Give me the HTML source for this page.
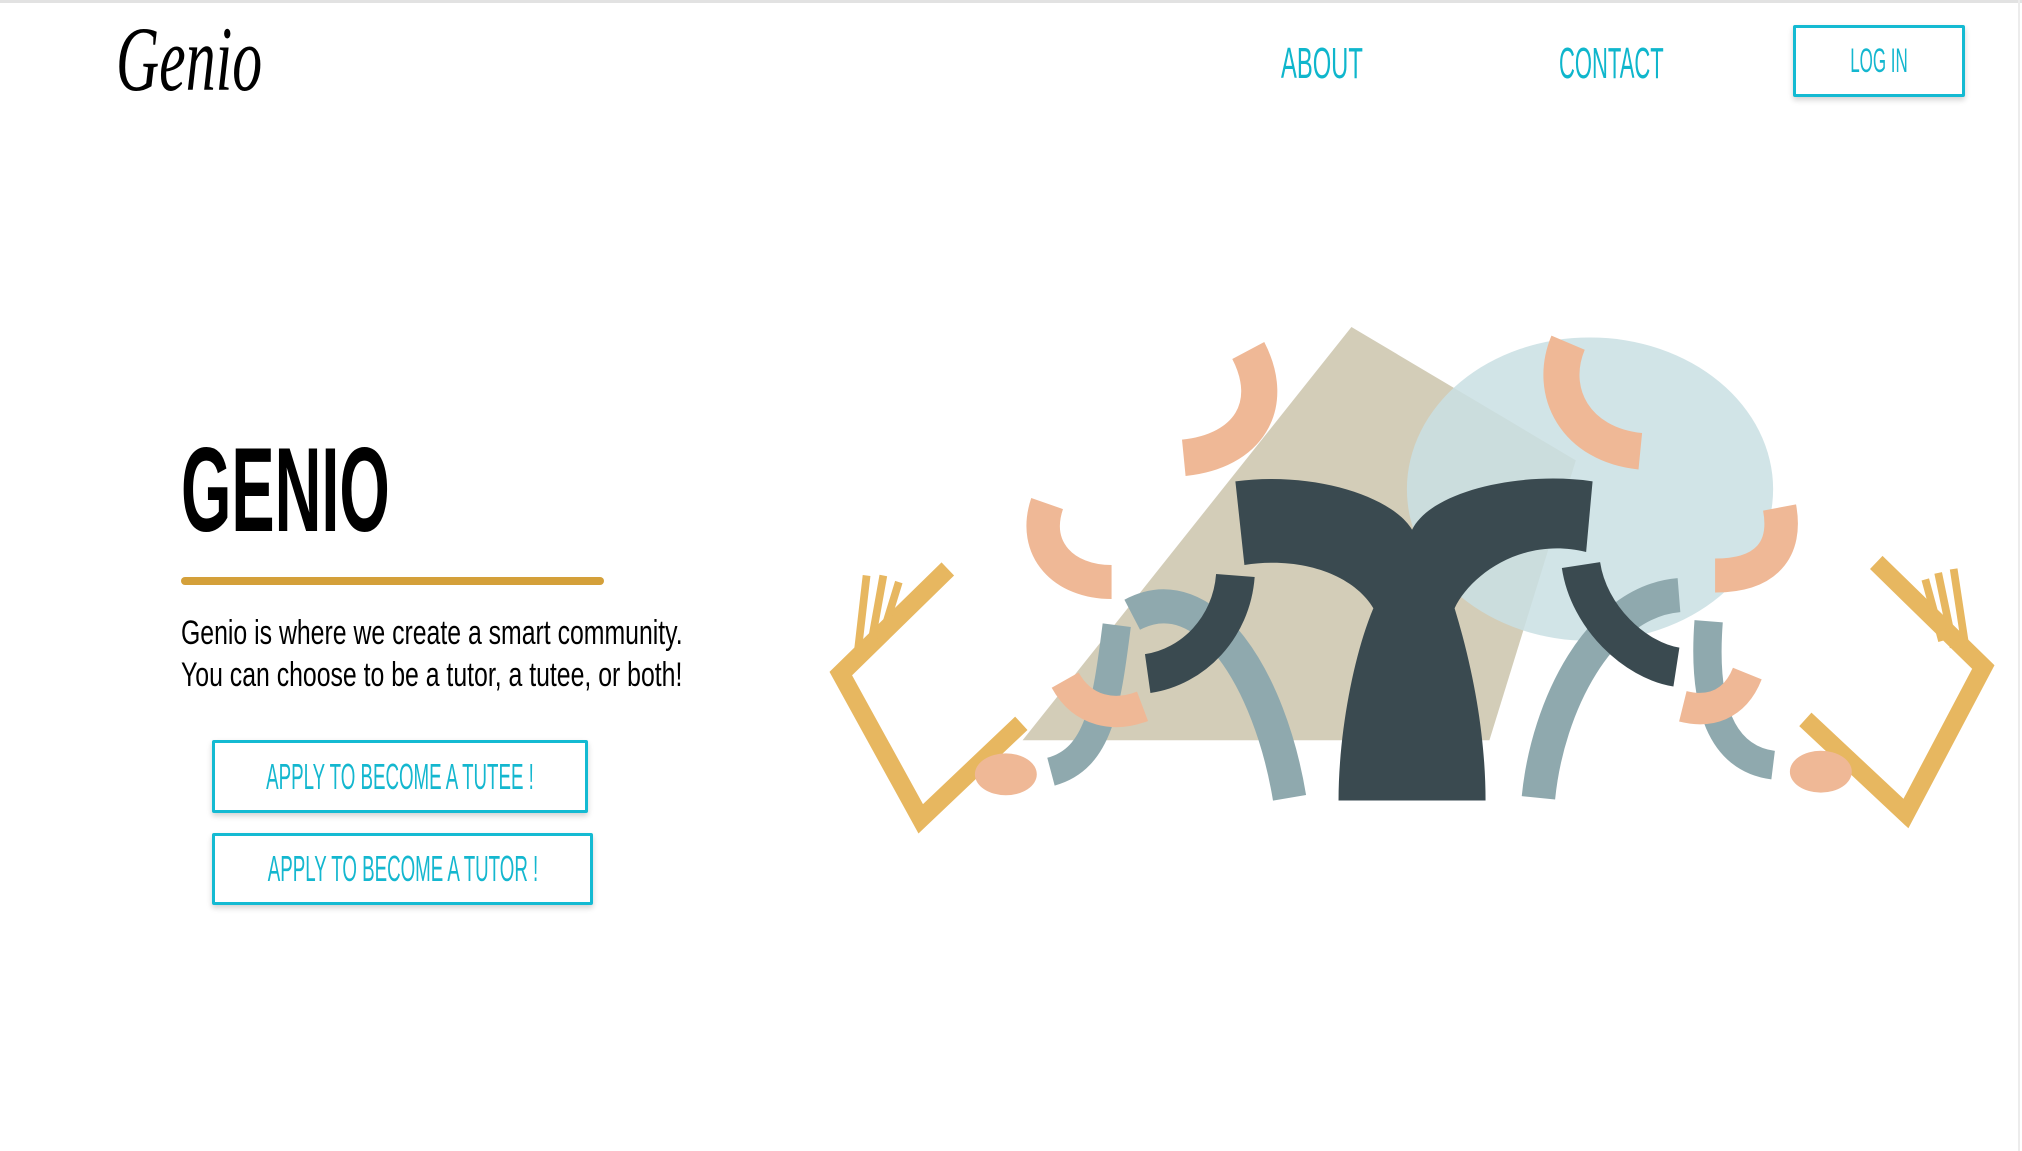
<!DOCTYPE html>
<html><head><meta charset="utf-8"><style>
html,body{margin:0;padding:0;}
body{width:2022px;height:1151px;position:relative;overflow:hidden;background:#fff;font-family:"Liberation Sans",sans-serif;}
.t{position:absolute;white-space:nowrap;}
.c{display:inline-block;transform-origin:0 0;}
.nav{color:#0fb6cc;font-size:44px;line-height:44px;}
.btn{position:absolute;border:3px solid #14bad2;box-sizing:border-box;border-radius:2px;box-shadow:0 3px 6px rgba(0,0,0,0.18);background:#fff;}
.btn span{position:absolute;left:50%;top:50%;white-space:nowrap;color:#14b7cf;font-size:36px;line-height:36px;transform:translate(-50%,-50%) scaleX(0.52);}
</style></head><body>
<div style="position:absolute;left:0;top:0;width:2022px;height:3px;background:#e2e2e2"></div>
<div style="position:absolute;right:2px;top:0;width:2px;height:1151px;background:#ececec"></div>

<div class="t" style="left:116px;top:4px;font-family:'Liberation Serif',serif;font-style:italic;font-size:92px;line-height:110px;"><span class="c" style="transform:scaleX(0.65)">Genio</span></div>

<div class="t nav" style="left:1281px;top:42px;"><span class="c" style="transform:scaleX(0.54)">ABOUT</span></div>
<div class="t nav" style="left:1559px;top:42px;"><span class="c" style="transform:scaleX(0.5)">CONTACT</span></div>
<div class="btn" style="left:1793px;top:25px;width:172px;height:72px;"><span style="font-size:34px;transform:translate(-50%,-50%) scaleX(0.5)">LOG IN</span></div>

<div class="t" style="left:181px;top:430px;font-size:120px;line-height:120px;font-weight:bold;"><span class="c" style="transform:scaleX(0.54)">GENIO</span></div>
<div style="position:absolute;left:181px;top:577px;width:423px;height:8px;background:#d4a03a;border-radius:4px"></div>
<div class="t" style="left:181px;top:612px;font-size:34px;line-height:42px;"><span class="c" style="transform:scaleX(0.73)">Genio is where we create a smart community.<br>You can choose to be a tutor, a tutee, or both!</span></div>

<div class="btn" style="left:212px;top:740px;width:376px;height:73px;"><span>APPLY TO BECOME A TUTEE !</span></div>
<div class="btn" style="left:212px;top:833px;width:381px;height:72px;"><span>APPLY TO BECOME A TUTOR !</span></div>

<svg style="position:absolute;left:0;top:0" width="2022" height="1151" viewBox="0 0 1568 880" preserveAspectRatio="none">
<polygon points="1048,250 1222,352 1155,566 793,566" fill="#d3cdb8"/>
<ellipse cx="1233" cy="374" rx="142" ry="116" fill="#c9dfe3" opacity="0.85"/>
<g fill="none" stroke-linecap="butt">
<path d="M878,470 C935,440 985,520 1000,610" stroke="#8fa9ae" stroke-width="26"/>
<path d="M866,478 C858,540 852,580 815,590" stroke="#8fa9ae" stroke-width="22"/>
<path d="M1302,455 C1240,460 1200,540 1193,610" stroke="#8fa9ae" stroke-width="26"/>
<path d="M1325,475 C1320,540 1335,580 1375,585" stroke="#8fa9ae" stroke-width="22"/>
<path d="M958,440 C955,480 925,510 890,515" stroke="#3a4a50" stroke-width="30"/>
<path d="M1226,432 C1232,472 1268,505 1300,510" stroke="#3a4a50" stroke-width="30"/>
<path d="M968,268 C990,310 968,345 918,350" stroke="#efb896" stroke-width="28"/>
<path d="M1216,262 C1200,300 1222,340 1272,345" stroke="#efb896" stroke-width="28"/>
<path d="M812,385 C800,420 825,445 862,445" stroke="#efb896" stroke-width="26"/>
<path d="M1380,388 C1386,420 1370,440 1330,440" stroke="#efb896" stroke-width="26"/>
<path d="M826,520 C840,545 865,548 886,540" stroke="#efb896" stroke-width="24"/>
<path d="M1355,515 C1345,540 1325,545 1305,540" stroke="#efb896" stroke-width="24"/>
<path d="M735,435 L652,515 L714,626 L792,553" stroke="#e7b760" stroke-width="14" stroke-linejoin="miter"/>
<path d="M665,500 L672,440 M675,495 L685,440 M683,490 L697,445" stroke="#e7b760" stroke-width="6"/>
<path d="M1455,430 L1538,510 L1478,622 L1400,550" stroke="#e7b760" stroke-width="14"/>
<path d="M1525,500 L1515,435 M1515,495 L1503,438 M1506,490 L1493,443" stroke="#e7b760" stroke-width="6"/>
</g>
<ellipse cx="780" cy="592" rx="24" ry="16" fill="#efb896"/>
<ellipse cx="1412" cy="590" rx="24" ry="16" fill="#efb896"/>
<path d="M958,368 C1020,360 1080,380 1095,405 C1110,375 1180,360 1235,368 L1230,422 C1180,410 1140,440 1128,465 C1145,520 1152,570 1152,612 L1038,612 C1038,560 1050,500 1065,465 C1050,440 1010,425 965,432 Z" fill="#3a4a50"/>
</svg>
</body></html>
